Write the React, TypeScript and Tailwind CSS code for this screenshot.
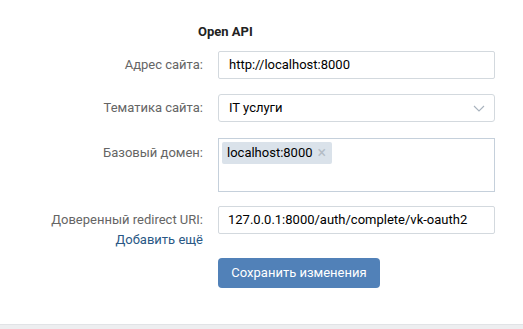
import React from "react";

export default function App() {
  const font = { fontFamily: "Roboto, 'Open Sans', Arial, sans-serif" };
  return (
    <div className="w-[523px] h-[329px] bg-white flex flex-col text-[13px] leading-[16px]" style={font}>
      <div className="pl-[198px] pt-[24px] h-[51px] font-bold text-[#222]">Open API</div>
      <div className="flex flex-col">
        <div className="flex h-[28px]">
          <div className="w-[203px] text-right text-[#656565] pt-[6px]">Адрес сайта:</div>
          <div className="ml-[15px] w-[277px] h-[28px] border border-[#d3d9de] rounded-[2px] px-[10px] pt-[5px] text-black">http://localhost:8000</div>
        </div>
        <div className="flex h-[28px] mt-[15px]">
          <div className="w-[203px] text-right text-[#656565] pt-[6px]">Тематика сайта:</div>
          <div className="ml-[15px] w-[277px] h-[28px] border border-[#d3d9de] rounded-[3px] pl-[10px] pr-[9px] flex items-center justify-between text-black">
            <span>IT услуги</span>
            <svg width="12" height="7" viewBox="0 0 12 7" fill="none">
              <path d="M1 1l5 5 5-5" stroke="#a8b2bd" strokeWidth="1.1" />
            </svg>
          </div>
        </div>
        <div className="flex h-[54px] mt-[16px]">
          <div className="w-[203px] text-right text-[#656565] pt-[7px]">Базовый домен:</div>
          <div className="ml-[15px] w-[277px] h-[54px] border border-[#c5d0db] pl-[3px] pt-[3px]">
            <div className="inline-flex items-center h-[22px] bg-[#dae2ea] rounded-[2px] pl-[5px] pr-[6px] text-black">
              localhost:8000
              <span className="ml-[5px] text-[#b4bcc5] text-[16px] leading-[16px]">×</span>
            </div>
          </div>
        </div>
        <div className="flex h-[28px] mt-[14px]">
          <div className="w-[203px] text-right text-[#656565] pt-[6px]">Доверенный redirect URI:</div>
          <div className="ml-[15px] w-[277px] h-[28px] border border-[#d3d9de] rounded-[2px] px-[9px] pt-[5px] text-black">127.0.0.1:8000/auth/complete/vk-oauth2</div>
        </div>
        <div className="w-[203px] text-right text-[#2a5885] mt-[-2px]">Добавить ещё</div>
        <div className="ml-[218px] mt-[10px] w-[162px] h-[30px] rounded-[4px] bg-[#5181b8] text-white flex items-center justify-center">
          Сохранить изменения
        </div>
      </div>
      <div className="mt-auto h-[5px] bg-[#edeef0] border-t border-[#e1e3e6]"></div>
    </div>
  );
}
